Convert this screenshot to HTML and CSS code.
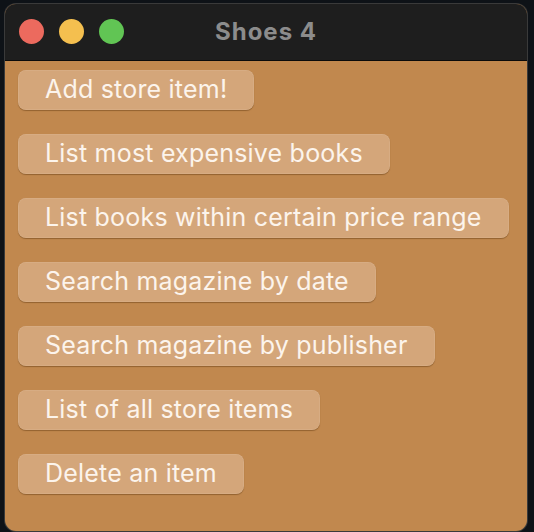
FILE: index.html
```html
<!DOCTYPE html>
<html>
<head>
<meta charset="utf-8">
<link rel="stylesheet" href="styles.css">
</head>
<body>
<div class="window">
  <div class="titlebar">
    <div class="lights">
      <span class="light red"></span>
      <span class="light yellow"></span>
      <span class="light green"></span>
    </div>
    <div class="title">Shoes 4</div>
  </div>
  <div class="content">
    <button class="btn">Add store item!</button>
    <button class="btn">List most expensive books</button>
    <button class="btn">List books within certain price range</button>
    <button class="btn">Search magazine by date</button>
    <button class="btn">Search magazine by publisher</button>
    <button class="btn">List of all store items</button>
    <button class="btn">Delete an item</button>
  </div>
</div>
</body>
</html>
```
FILE: styles.css
```css
html, body {
  margin: 0;
  height: 100%;
}
body {
  background: #0e1217;
  padding: 4px 7px 1px 5px;
  box-sizing: border-box;
  font-family: Inter, "Open Sans", sans-serif;
}
.window {
  height: 527px;
  border-radius: 11px;
  overflow: hidden;
  background: #c1884e;
  box-shadow: 0 0 0 1px #3a3a3a;
  display: flex;
  flex-direction: column;
}
.titlebar {
  position: relative;
  height: 56px;
  background: #1e1e1e;
  border-bottom: 1px solid #0a0a0a;
  display: flex;
  align-items: center;
  justify-content: center;
  flex-shrink: 0;
}
.lights {
  position: absolute;
  left: 14px;
  top: 15px;
  display: flex;
  gap: 15px;
}
.light {
  width: 25px;
  height: 25px;
  border-radius: 50%;
}
.red { background: #ec6a5e; }
.yellow { background: #f4bf4f; }
.green { background: #61c554; }
.title {
  color: #8c8c8c;
  font-weight: 700;
  font-size: 24px;
  letter-spacing: 1px;
  margin-top: -2px;
}
.content {
  padding: 9px 13px;
  display: flex;
  flex-direction: column;
  align-items: flex-start;
  gap: 24px;
}
.btn {
  height: 40px;
  padding: 0 27px 2px;
  border: none;
  border-radius: 8px;
  background: #d4a67a;
  color: #fcf4ec;
  font-family: Inter, "Open Sans", sans-serif;
  font-size: 25px;
  letter-spacing: 0.2px;
  box-shadow: 0 1px 1px rgba(90, 50, 10, 0.45), inset 0 0 0 0.5px rgba(255,255,255,0.15);
  white-space: nowrap;
}
```
